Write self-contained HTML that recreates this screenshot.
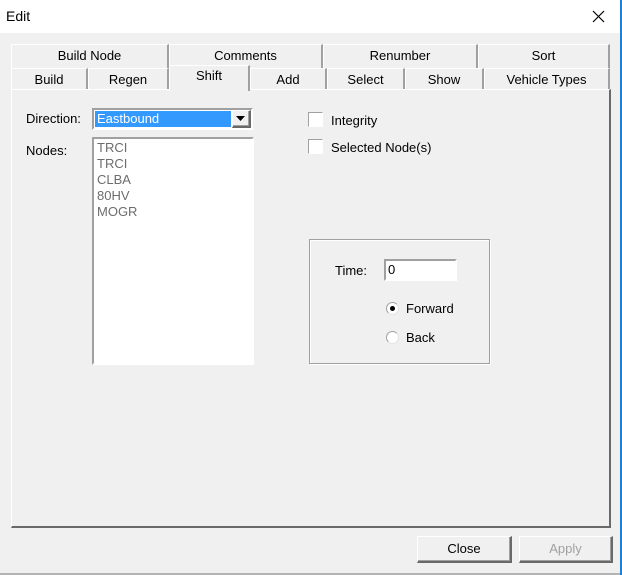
<!DOCTYPE html>
<html><head><style>
*{box-sizing:border-box;margin:0;padding:0}
body{width:622px;height:575px;background:#f0f0f0;font-family:"Liberation Sans",sans-serif;font-size:13px;color:#000;position:relative;overflow:hidden}
.a{position:absolute}
.title{left:0;top:0;width:621px;height:33px;background:#fff}
.tab{position:absolute;height:24px;border:1px solid #fff;border-right:2px solid #a0a0a0;border-bottom:none;text-align:center;line-height:22px;background:#f0f0f0;border-left-color:#fff}
.sunk{border-top:1px solid #a0a0a0;border-left:1px solid #a0a0a0;border-right:1px solid #fff;border-bottom:1px solid #fff}
.btn{position:absolute;border:1px solid #fff;border-right:2px solid #696969;border-bottom:2px solid #696969;text-align:center;line-height:24px;background:#f0f0f0;box-shadow:inset -1px -1px 0 #a0a0a0}
.radio{position:absolute;width:13px;height:13px;border-radius:50%;background:#fff;border:1px solid #a0a0a0;border-right-color:#e3e3e3;border-bottom-color:#e3e3e3}
</style></head><body>
<div class="a title"></div>
<div class="a" style="left:6px;top:8px;font-size:14px">Edit</div>
<svg class="a" style="left:592px;top:10px" width="13" height="13"><path d="M1 1L12 12M12 1L1 12" stroke="#000" stroke-width="1.2"/></svg>
<div class="a" style="left:620px;top:0;width:2px;height:575px;background:#1e7fd8"></div>
<div class="a" style="left:0;top:573px;width:620px;height:2px;background:#b4b4b4"></div>

<!-- panel -->
<div class="a" style="left:11px;top:89px;width:600px;height:439px;border:1px solid #fff;border-right:2px solid #696969;border-bottom:2px solid #696969"></div>

<!-- tabs row1 -->
<div class="tab" style="left:11px;top:44px;width:158px">Build Node</div>
<div class="tab" style="left:169px;top:44px;width:154px">Comments</div>
<div class="tab" style="left:323px;top:44px;width:155px">Renumber</div>
<div class="tab" style="left:478px;top:44px;width:132px">Sort</div>
<!-- tabs row2 -->
<div class="tab" style="left:11px;top:68px;width:77px;height:21px">Build</div>
<div class="tab" style="left:88px;top:68px;width:81px;height:21px">Regen</div>
<div class="tab" style="left:250px;top:68px;width:77px;height:21px">Add</div>
<div class="tab" style="left:327px;top:68px;width:78px;height:21px">Select</div>
<div class="tab" style="left:405px;top:68px;width:79px;height:21px">Show</div>
<div class="tab" style="left:484px;top:68px;width:126px;height:21px">Vehicle Types</div>
<div class="tab" style="left:169px;top:65px;width:81px;height:26px;line-height:20px;border-bottom:none">Shift</div>

<div class="a" style="left:26px;top:111px">Direction:</div>
<div class="a sunk" style="left:92px;top:108px;width:161px;height:22px;border-width:2px;background:#fff"></div>
<div class="a" style="left:95px;top:111px;width:136px;height:16px;background:#3399ff;color:#fff;line-height:16px;padding-left:2px">Eastbound</div>
<div class="btn" style="left:232px;top:110px;width:19px;height:18px;line-height:16px"></div>
<svg class="a" style="left:236px;top:116px" width="10" height="6"><path d="M0 0H9L4.5 5Z" fill="#000"/></svg>

<div class="a" style="left:26px;top:143px">Nodes:</div>
<div class="a sunk" style="left:92px;top:137px;width:162px;height:228px;border-width:2px;background:#fff;color:#6d6d6d;line-height:16px;padding:1px 0 0 3px">TRCI<br>TRCI<br>CLBA<br>80HV<br>MOGR</div>

<div class="a sunk" style="left:308px;top:112px;width:15px;height:15px;background:#fff;border-width:1px"></div>
<div class="a" style="left:331px;top:113px">Integrity</div>
<div class="a sunk" style="left:308px;top:139px;width:15px;height:15px;background:#fff;border-width:1px"></div>
<div class="a" style="left:331px;top:140px">Selected Node(s)</div>

<div class="a" style="left:309px;top:239px;width:181px;height:125px;border:1px solid #a0a0a0;box-shadow:1px 1px 0 #fff, inset 1px 1px 0 #fff"></div>
<div class="a" style="left:335px;top:263px">Time:</div>
<div class="a sunk" style="left:384px;top:259px;width:73px;height:22px;background:#fff;border-width:2px;padding-left:2px;line-height:17px">0</div>
<div class="radio" style="left:386px;top:302px"></div>
<div class="a" style="left:390px;top:306px;width:5px;height:5px;border-radius:50%;background:#000"></div>
<div class="a" style="left:406px;top:301px">Forward</div>
<div class="radio" style="left:386px;top:331px"></div>
<div class="a" style="left:406px;top:330px">Back</div>

<div class="btn" style="left:417px;top:536px;width:95px;height:27px">Close</div>
<div class="btn" style="left:519px;top:536px;width:94px;height:27px;color:#a0a0a0">Apply</div>
</body></html>
